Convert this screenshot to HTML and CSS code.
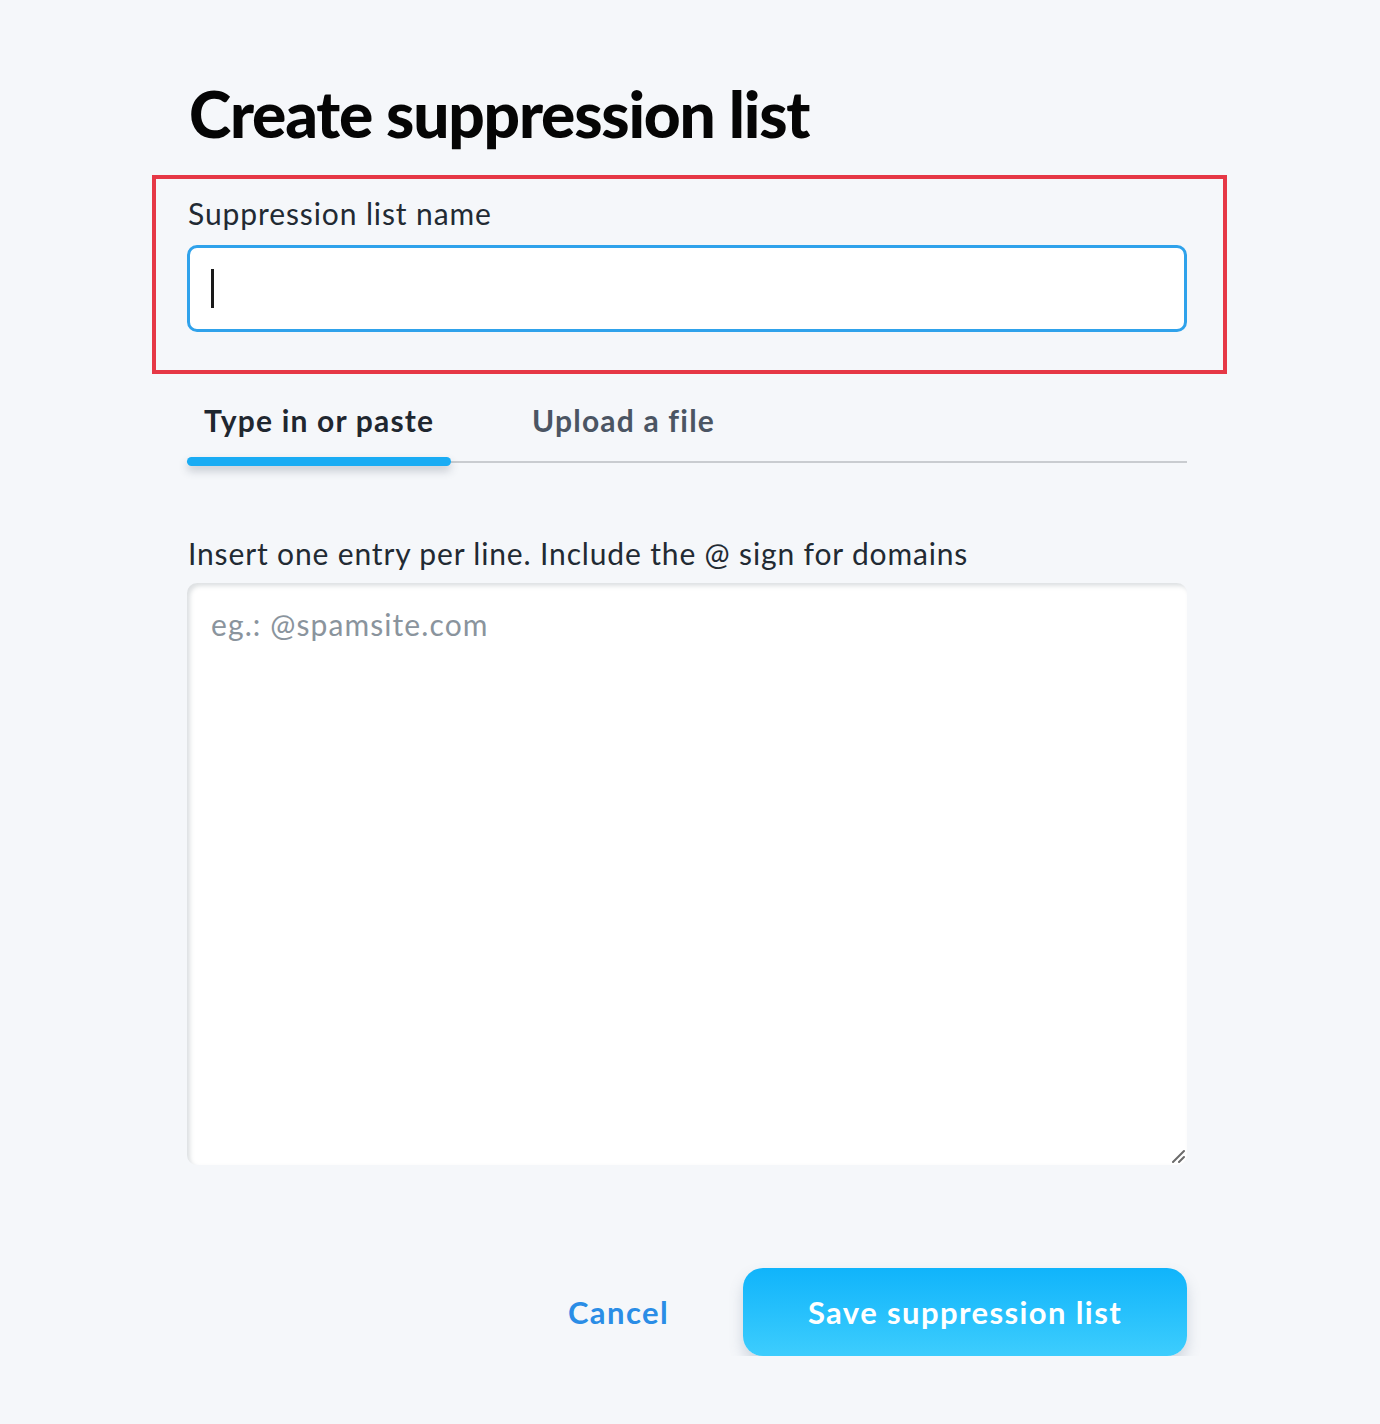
FILE: index.html
```html
<!DOCTYPE html>
<html lang="en">
<head>
<meta charset="utf-8">
<title>Create suppression list</title>
<link rel="stylesheet" href="styles.css">
</head>
<body>
<main class="page">
  <h1 class="title">Create suppression list</h1>

  <section class="field highlight">
    <label class="field-label" for="list-name">Suppression list name</label>
    <div class="input-box">
      <span class="caret"></span>
      <input id="list-name" class="input" type="text">
    </div>
  </section>

  <nav class="tabs">
    <div class="tab active">Type in or paste</div>
    <div class="tab">Upload a file</div>
  </nav>

  <section class="entries">
    <p class="hint">Insert one entry per line. Include the @ sign for domains</p>
    <div class="textarea">
      <span class="placeholder">eg.: @spamsite.com</span>
      <svg class="grip" width="14" height="14" viewBox="0 0 14 14" aria-hidden="true">
        <path d="M2 13 L13 2 M8 13 L13 8" stroke="#6b6b6b" stroke-width="2" stroke-linecap="round" fill="none"/>
      </svg>
    </div>
  </section>

  <footer class="actions">
    <button class="btn-link" type="button">Cancel</button>
    <button class="btn-primary" type="button">Save suppression list</button>
  </footer>
</main>
</body>
</html>
```

FILE: styles.css
```css
html, body {
  margin: 0;
  padding: 0;
}
body {
  background: #f5f7fa;
  font-family: "Lato", "Liberation Sans", sans-serif;
  color: #1e2630;
}
.page {
  width: 1000px;
  padding: 74px 0 0 187px;
  display: flex;
  flex-direction: column;
}
.title {
  margin: 0 0 0 2px;
  font-family: "Lato", sans-serif;
  font-weight: 900;
  font-size: 64px;
  line-height: 80px;
  color: #050505;
  letter-spacing: -1.2px;
}
.highlight {
  margin: 21px -40px 0 -35px;
  border: 4px solid #e63846;
  padding: 15px 36px 38px 31px;
}
.field {
  display: flex;
  flex-direction: column;
}
.field-label {
  font-size: 30px;
  line-height: 38px;
  letter-spacing: 0.9px;
  color: #222a33;
  margin-left: 1px;
}
.input-box {
  margin-top: 13px;
  height: 81px;
  border: 3px solid #2fa2eb;
  border-radius: 10px;
  background: #fff;
  display: flex;
  align-items: center;
  padding-left: 21px;
}
.caret {
  width: 3px;
  height: 39px;
  background: #1a1a1a;
}
.input {
  border: 0;
  outline: none;
  background: transparent;
  flex: 1;
  font: inherit;
}
.tabs {
  margin-top: 21px;
  display: flex;
  border-bottom: 2px solid #c9ccd0;
  height: 66px;
}
.tab {
  font-size: 30px;
  font-weight: 700;
  color: #4b5563;
  line-height: 50px;
  letter-spacing: 1.2px;
  white-space: nowrap;
  padding: 0 17px;
  position: relative;
}
.tab.active {
  color: #1f2730;
  width: 264px;
  box-sizing: border-box;
  margin-right: 64px;
}
.tab.active::after {
  content: "";
  position: absolute;
  left: 0;
  right: 0;
  bottom: -5px;
  height: 9px;
  border-radius: 5px;
  background: #19acf4;
  box-shadow: 0 5px 8px rgba(60, 70, 90, 0.25);
}
.entries {
  margin-top: 71px;
  display: flex;
  flex-direction: column;
}
.hint {
  margin: 0 0 0 1px;
  font-size: 30px;
  line-height: 38px;
  letter-spacing: 0.85px;
  color: #222a33;
}
.textarea {
  margin-top: 11px;
  height: 582px;
  background: #fff;
  border-radius: 10px;
  box-shadow: inset 3px 3px 4px rgba(120, 130, 140, 0.25);
  position: relative;
  padding: 22px 24px;
  box-sizing: border-box;
}
.placeholder {
  font-size: 30px;
  line-height: 38px;
  letter-spacing: 1.1px;
  color: #8a949d;
}
.grip {
  position: absolute;
  right: 2px;
  bottom: 2px;
}
.actions {
  margin-top: 103px;
  display: flex;
  justify-content: flex-end;
  align-items: center;
}
.btn-link {
  background: none;
  border: 0;
  font-family: "Lato", sans-serif;
  font-weight: 700;
  font-size: 31px;
  letter-spacing: 1.4px;
  color: #2a8de6;
  margin-right: 74px;
  padding: 0;
  cursor: pointer;
}
.btn-primary {
  width: 444px;
  height: 88px;
  border: 0;
  border-radius: 20px;
  background: linear-gradient(180deg, #10b4fb 0%, #3dcdfd 100%);
  box-shadow: 0 8px 14px rgba(90, 110, 140, 0.25);
  color: #fff;
  font-family: "Lato", sans-serif;
  font-weight: 700;
  font-size: 31px;
  letter-spacing: 1.4px;
  cursor: pointer;
}
```
